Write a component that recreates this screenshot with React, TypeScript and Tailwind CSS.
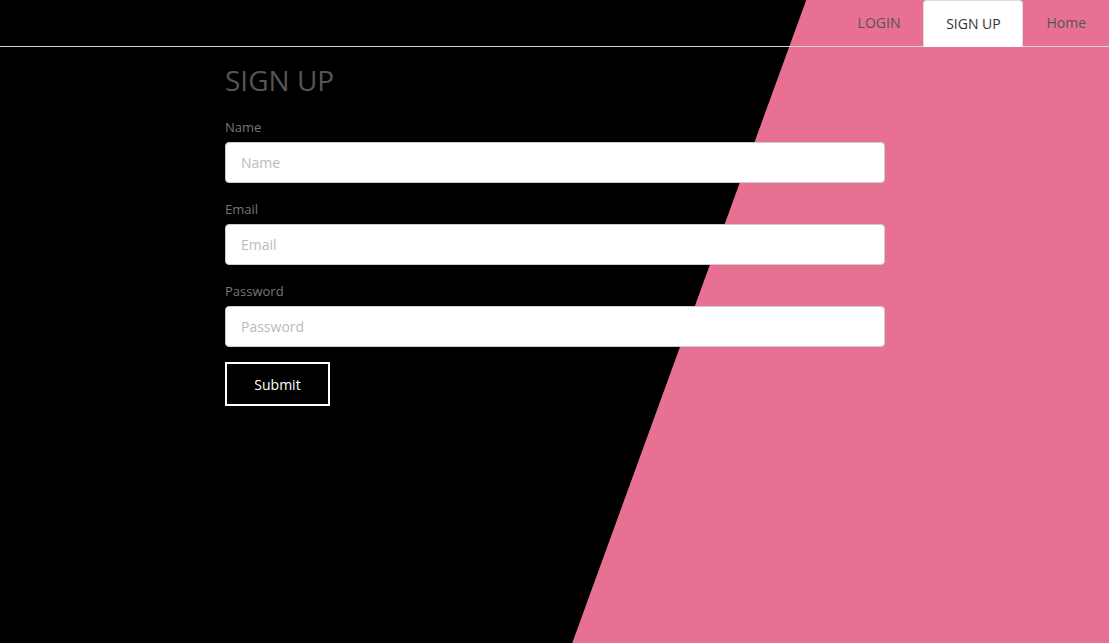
import React from "react";

const fields = [
  { label: "Name", type: "text" },
  { label: "Email", type: "email" },
  { label: "Password", type: "password" },
];

export default function App() {
  return (
    <div
      className="relative h-[643px] w-full overflow-hidden bg-black"
      style={{ fontFamily: '"Open Sans", "Noto Sans", sans-serif' }}
    >
      {/* pink diagonal backdrop */}
      <div className="absolute inset-0 bg-[#e87193] [clip-path:polygon(72.7%_0,100%_0,100%_100%,51.6%_100%)]" />

      <div className="relative">
        <nav className="flex h-[47px] items-end justify-end border-b border-[#d6d6d6]">
          <a className="flex h-[46px] items-center px-[23px] pb-[2px] text-[14px] text-[#555]">LOGIN</a>
          <a className="mb-[-1px] flex h-[47px] w-[100px] items-center justify-center rounded-t-[4px] border border-b-0 border-[#ddd] bg-white pb-[2px] text-[14px] text-[#333]">
            SIGN UP
          </a>
          <a className="flex h-[46px] items-center px-[23px] pb-[2px] text-[14px] text-[#555]">Home</a>
        </nav>

        <div className="ml-[225px] w-[660px] pt-[15px]">
          <h1 className="text-[28px] font-normal leading-[36px] text-[#555]">SIGN UP</h1>
          <form className="mt-[20px] flex flex-col">
            {fields.map((f) => (
              <div key={f.label} className="mb-[17px] flex flex-col">
                <label className="mb-[6px] text-[13px] leading-[18px] text-[#777]">{f.label}</label>
                <input
                  type={f.type}
                  placeholder={f.label}
                  className="h-[41px] w-full rounded-[4px] border border-[#ccc] bg-white px-[15px] text-[14px] text-[#555] outline-none placeholder:text-[#bbb]"
                />
              </div>
            ))}
            <button
              type="button"
              className="-mt-[2px] h-[44px] w-[105px] border-2 border-white bg-black text-[14px] text-white"
            >
              Submit
            </button>
          </form>
        </div>
      </div>
    </div>
  );
}
